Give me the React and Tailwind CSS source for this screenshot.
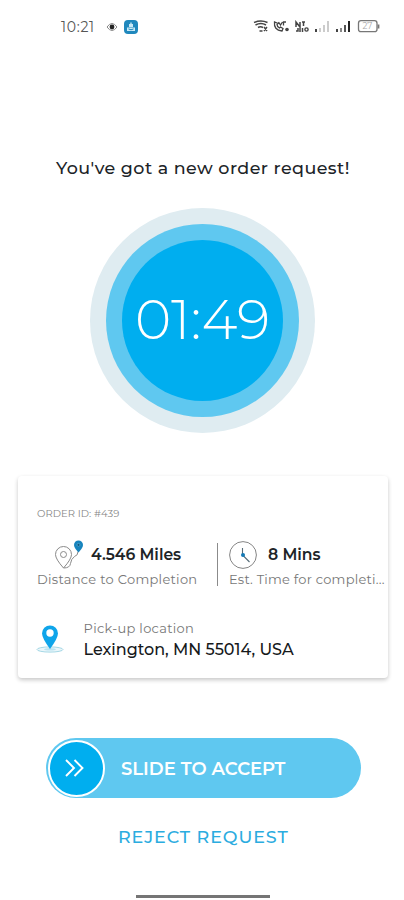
import React from "react";

function StatusBar() {
  return (
    <div className="flex h-[54px] items-center pl-[61px] text-[#555]">
      <span className="w-[45px] whitespace-nowrap text-[14px] leading-[52px] tracking-[0.7px]">10:21</span>
      <svg width="12" height="12" viewBox="0 0 12 12" fill="none">
        <path d="M1 6Q6 -1 11 6Q6 13 1 6Z" stroke="#888" strokeWidth="1" />
        <circle cx="6" cy="6" r="2.4" fill="#222" />
      </svg>
      <svg className="ml-[6px]" width="14" height="14" viewBox="0 0 14 14">
        <rect width="14" height="14" rx="4" fill="#2088bd" />
        <path d="M3 7.5h8v3.5H3zM5 4h4v3H5zM6.3 2.5h1.4V5H6.3z" fill="#c9e9f6" />
        <path d="M4.5 9q2.5 1.5 5 0" stroke="#2088bd" fill="none" />
      </svg>
      <svg className="ml-[115px]" width="127" height="14" viewBox="253 20 127 14" fill="none" stroke="#444">
        <path d="M254 22.5q7-3 13.500 0M255.500 25q5.500-3 10.500 0M258 27.500q2.500-1.500 5 0" strokeWidth="1.5" />
        <path d="M259.500 31h3M264 27l3 4M267 27l-3 4" strokeWidth="1.4" />
        <path d="M274.500 22q-1 8 7.500 9l1-2.500-2.500-1.500-1 1q-2.500-1.500-2.500-3.500l1-1zM278.500 22l2 3 2-3M283.500 25.500V22h2.500" strokeWidth="1.3" />
        <circle cx="287" cy="29.500" r="1.800" fill="#444" stroke="none" />
        <path d="M296 27v-5l4 5v-5M302 22h3M303.500 22v4M296 31h2v-3M300 28v4M302.500 28v4" strokeWidth="1.500" />
        <circle cx="306.500" cy="29.500" r="1.600" strokeWidth="1.400" />
        <path d="M316 29v3" strokeWidth="2" />
        <path d="M320 28v4M324 25v7M328 21v11" stroke="#ccc" strokeWidth="2" />
        <path d="M337 29v3" strokeWidth="2" />
        <path d="M341 28v4" stroke="#888" strokeWidth="2" />
        <path d="M345 25v7" stroke="#555" strokeWidth="2" />
        <path d="M349 21v11" stroke="#222" strokeWidth="2" />
        <rect x="358.500" y="20.700" width="18.500" height="11" rx="2.500" stroke="#777" strokeWidth="1.300" />
        <path d="M378.500 24.500v4" stroke="#777" strokeWidth="1.800" />
        <text x="362.500" y="29.300" fontSize="8.500" fill="#aaa" stroke="none">27</text>
      </svg>
    </div>
  );
}

function Timer() {
  return (
    <div className="mt-[28px] ml-[90px] flex size-[225px] items-center justify-center rounded-full bg-[#dfecf1]">
      <div className="flex size-[193px] items-center justify-center rounded-full bg-[#5fc8f0]">
        <div className="flex size-[161px] items-center justify-center rounded-full bg-[#00aeef]">
          <span className="whitespace-nowrap pb-[1px] text-[55px] leading-[60px] font-light text-white">01:49</span>
        </div>
      </div>
    </div>
  );
}

function RouteIcon() {
  return (
    <svg width="30" height="30" viewBox="0 0 30 30" fill="none">
      <path d="M9.500 28Q1.500 19 1.500 14.500a8 8 0 0 1 16 0Q17.500 19 9.500 28Z" stroke="#8a8a8a" />
      <circle cx="9.500" cy="14.500" r="3" stroke="#8a8a8a" />
      <path d="M9.500 28q6.500 0 7-4.500t4-7q3.500-1 3.500-5" stroke="#8a8a8a" />
      <path d="M24.500 12.500Q20 7.500 20 4.900a4.500 4.500 0 0 1 9 0Q29 7.500 24.500 12.500Z" fill="#1784bd" />
      <circle cx="24.500" cy="4.900" r="1.500" fill="#0b577f" stroke="#65b6dc" strokeWidth=".6" />
    </svg>
  );
}

function ClockIcon() {
  return (
    <svg width="28" height="28" viewBox="0 0 28 28" fill="none">
      <circle cx="14" cy="14" r="13.400" stroke="#858585" />
      <path d="M13.500 7v7l7 7" stroke="#556b78" strokeWidth="1.100" />
      <circle cx="14" cy="14" r="2" fill="#1479b5" />
    </svg>
  );
}

function PickupIcon() {
  return (
    <svg width="28" height="28" viewBox="0 0 28 28" fill="none">
      <ellipse cx="14" cy="24.500" rx="13" ry="2.600" fill="#eaf6fa" stroke="#a5d8e6" />
      <ellipse cx="14" cy="24.300" rx="6" ry="1.300" fill="#b9e4f2" />
      <path d="M14 24Q6 13 6 8.500a8 8 0 0 1 16 0Q22 13 14 24Z" fill="#0fa5ea" />
      <circle cx="14" cy="8" r="3.700" fill="white" />
    </svg>
  );
}

function OrderCard() {
  return (
    <section className="mt-[43px] ml-[18px] flex h-[202px] w-[370px] flex-col rounded-[4px] bg-white pl-[19px] shadow-[0_2px_4px_rgba(0,0,0,0.22)]">
      <div className="mt-[30px] text-[10px] leading-[15px] tracking-[0.050px] whitespace-nowrap text-[#858585]">ORDER ID: #439</div>
      <div className="mt-[19px] flex h-[48px]">
        <div className="w-[180px]">
          <div className="flex h-[30px] items-center pl-[17px]">
            <RouteIcon />
            <span className="ml-[7px] whitespace-nowrap text-[15.600px] font-semibold text-[#202427]">4.546 Miles</span>
          </div>
          <div className="text-[13px] leading-[18px] tracking-[0.300px] whitespace-nowrap text-[#777]">Distance to Completion</div>
        </div>
        <div className="mt-[3px] h-[43px] w-px bg-[#8b8b8b]" />
        <div className="ml-[11px] w-[156px]">
          <div className="flex h-[30px] items-center">
            <ClockIcon />
            <span className="ml-[11px] whitespace-nowrap text-[15.600px] font-semibold text-[#202427]">8 Mins</span>
          </div>
          <div className="text-[13px] leading-[18px] tracking-[0.230px] whitespace-nowrap text-[#777]">Est. Time for completi...</div>
        </div>
      </div>
      <div className="mt-[30px] flex h-[44px]">
        <div className="-ml-px w-[47.500px] pt-[7px]"><PickupIcon /></div>
        <div className="whitespace-nowrap">
          <div className="text-[13px] leading-[20px] tracking-[0.300px] text-[#777]">Pick-up location</div>
          <div className="text-[16px] leading-[23px] font-medium text-[#16191b]">Lexington, MN 55014, USA</div>
        </div>
      </div>
    </section>
  );
}

export default function App() {
  return (
    <main className="flex h-[900px] w-[404px] flex-col overflow-hidden bg-white font-['Montserrat','Inter',sans-serif]">
      <StatusBar />
      <h1 className="mt-[101px] ml-[56px] text-[17.500px] leading-[25px] font-medium tracking-[0.430px] whitespace-nowrap text-[#1c2428]">You've got a new order request!</h1>
      <Timer />
      <OrderCard />
      <button className="mt-[60px] ml-[45.500px] flex h-[60px] w-[315.500px] items-center rounded-full bg-[#5fc8f0] pl-[2px]">
        <span className="flex size-[57px] items-center justify-center rounded-full border-2 border-white bg-[#00aeef]">
          <svg className="mr-[2px]" width="20" height="18" viewBox="0 0 20 18" fill="none" stroke="white" strokeWidth="1.900">
            <path d="M1 1l8 8L1 17M9.500 1l8 8L9.500 17" />
          </svg>
        </span>
        <span className="ml-[16.500px] whitespace-nowrap pt-[2px] text-[18px] leading-[24px] font-semibold text-white">SLIDE TO ACCEPT</span>
      </button>
      <button className="mt-[26px] ml-[118px] h-[26px] text-left text-[17.500px] leading-[26px] font-medium tracking-[0.900px] whitespace-nowrap text-[#2bacdf]">REJECT REQUEST</button>
      <div className="mt-[45px] ml-[136px] h-[3px] w-[134px] bg-[#757575]" />
    </main>
  );
}
